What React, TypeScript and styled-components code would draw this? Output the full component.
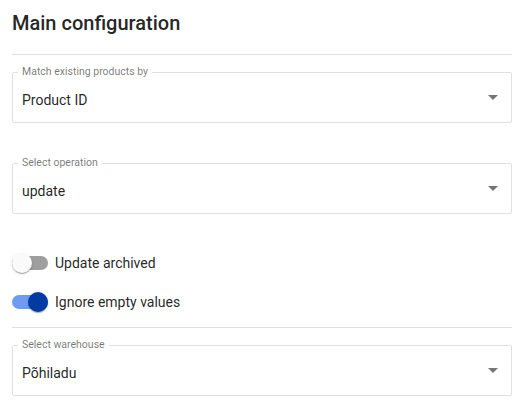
import styled, { createGlobalStyle } from 'styled-components';

const GlobalStyles = createGlobalStyle`
  body {
    margin: 0;
    background: #ffffff;
    font-family: Roboto, "Liberation Sans", sans-serif;
    color: rgba(0, 0, 0, 0.87);
  }
`;

const Page = styled.main`
  width: 500px;
  margin-left: 12px;
  display: flex;
  flex-direction: column;
`;

const Title = styled.h2`
  margin: 0;
  padding-top: 10px;
  font-size: 20px;
  line-height: 26px;
  font-weight: 500;
  color: rgba(0, 0, 0, 0.87);
`;

const Divider = styled.hr<{ $top: number }>`
  margin: ${({ $top }) => $top}px 0 0;
  border: none;
  border-top: 1px solid #e0e0e0;
  height: 0;
`;

const Field = styled.fieldset<{ $top: number }>`
  margin: ${({ $top }) => $top}px 0 0;
  padding: 0 13px 0 5px;
  border: 1px solid #e0e0e0;
  border-radius: 2px;
  min-width: 0;

  legend {
    margin: 0;
    padding: 0 4px;
    font-size: 10.5px;
    line-height: 12px;
    color: rgba(0, 0, 0, 0.54);
  }
`;

const SelectRow = styled.div`
  height: 44px;
  padding-left: 4px;
  display: flex;
  align-items: center;
  justify-content: space-between;
  font-size: 14px;

  svg {
    margin-top: -6px;
    margin-right: -7px;
  }
`;

const SwitchRow = styled.label<{ $top: number }>`
  margin-top: ${({ $top }) => $top}px;
  height: 38px;
  display: flex;
  align-items: center;
  gap: 7px;
  font-size: 14px;
  color: rgba(0, 0, 0, 0.87);
`;

const Switch = styled.span<{ $on: boolean }>`
  position: relative;
  width: 36px;
  height: 20px;
  flex-shrink: 0;

  &::before {
    content: '';
    position: absolute;
    left: 0;
    top: 3px;
    width: 36px;
    height: 14px;
    border-radius: 7px;
    background: ${({ $on }) => ($on ? '#6e9cf2' : '#9e9e9e')};
  }

  &::after {
    content: '';
    position: absolute;
    top: 0;
    left: ${({ $on }) => ($on ? 16 : 0)}px;
    width: 20px;
    height: 20px;
    border-radius: 50%;
    background: ${({ $on }) => ($on ? '#003ba3' : '#fafafa')};
    box-shadow: 0 2px 1px -1px rgba(0, 0, 0, 0.2), 0 1px 1px 0 rgba(0, 0, 0, 0.14),
      0 1px 3px 0 rgba(0, 0, 0, 0.12);
  }
`;

function ArrowDrop() {
  return (
    <svg width="24" height="24" viewBox="0 0 24 24">
      <path d="M7 10l5 5 5-5z" fill="#757575" />
    </svg>
  );
}

function Select({ label, value, top }: { label: string; value: string; top: number }) {
  return (
    <Field $top={top}>
      <legend>{label}</legend>
      <SelectRow>
        <span>{value}</span>
        <ArrowDrop />
      </SelectRow>
    </Field>
  );
}

export default function App() {
  return (
    <>
      <GlobalStyles />
      <Page>
        <Title>Main configuration</Title>
        <Divider $top={18} />
        <Select top={11} label="Match existing products by" value="Product ID" />
        <Select top={34} label="Select operation" value="update" />
        <SwitchRow $top={30}>
          <Switch $on={false} />
          Update archived
        </SwitchRow>
        <SwitchRow $top={1}>
          <Switch $on={true} />
          Ignore empty values
        </SwitchRow>
        <Divider $top={6} />
        <Select top={11} label="Select warehouse" value="Põhiladu" />
      </Page>
    </>
  );
}
